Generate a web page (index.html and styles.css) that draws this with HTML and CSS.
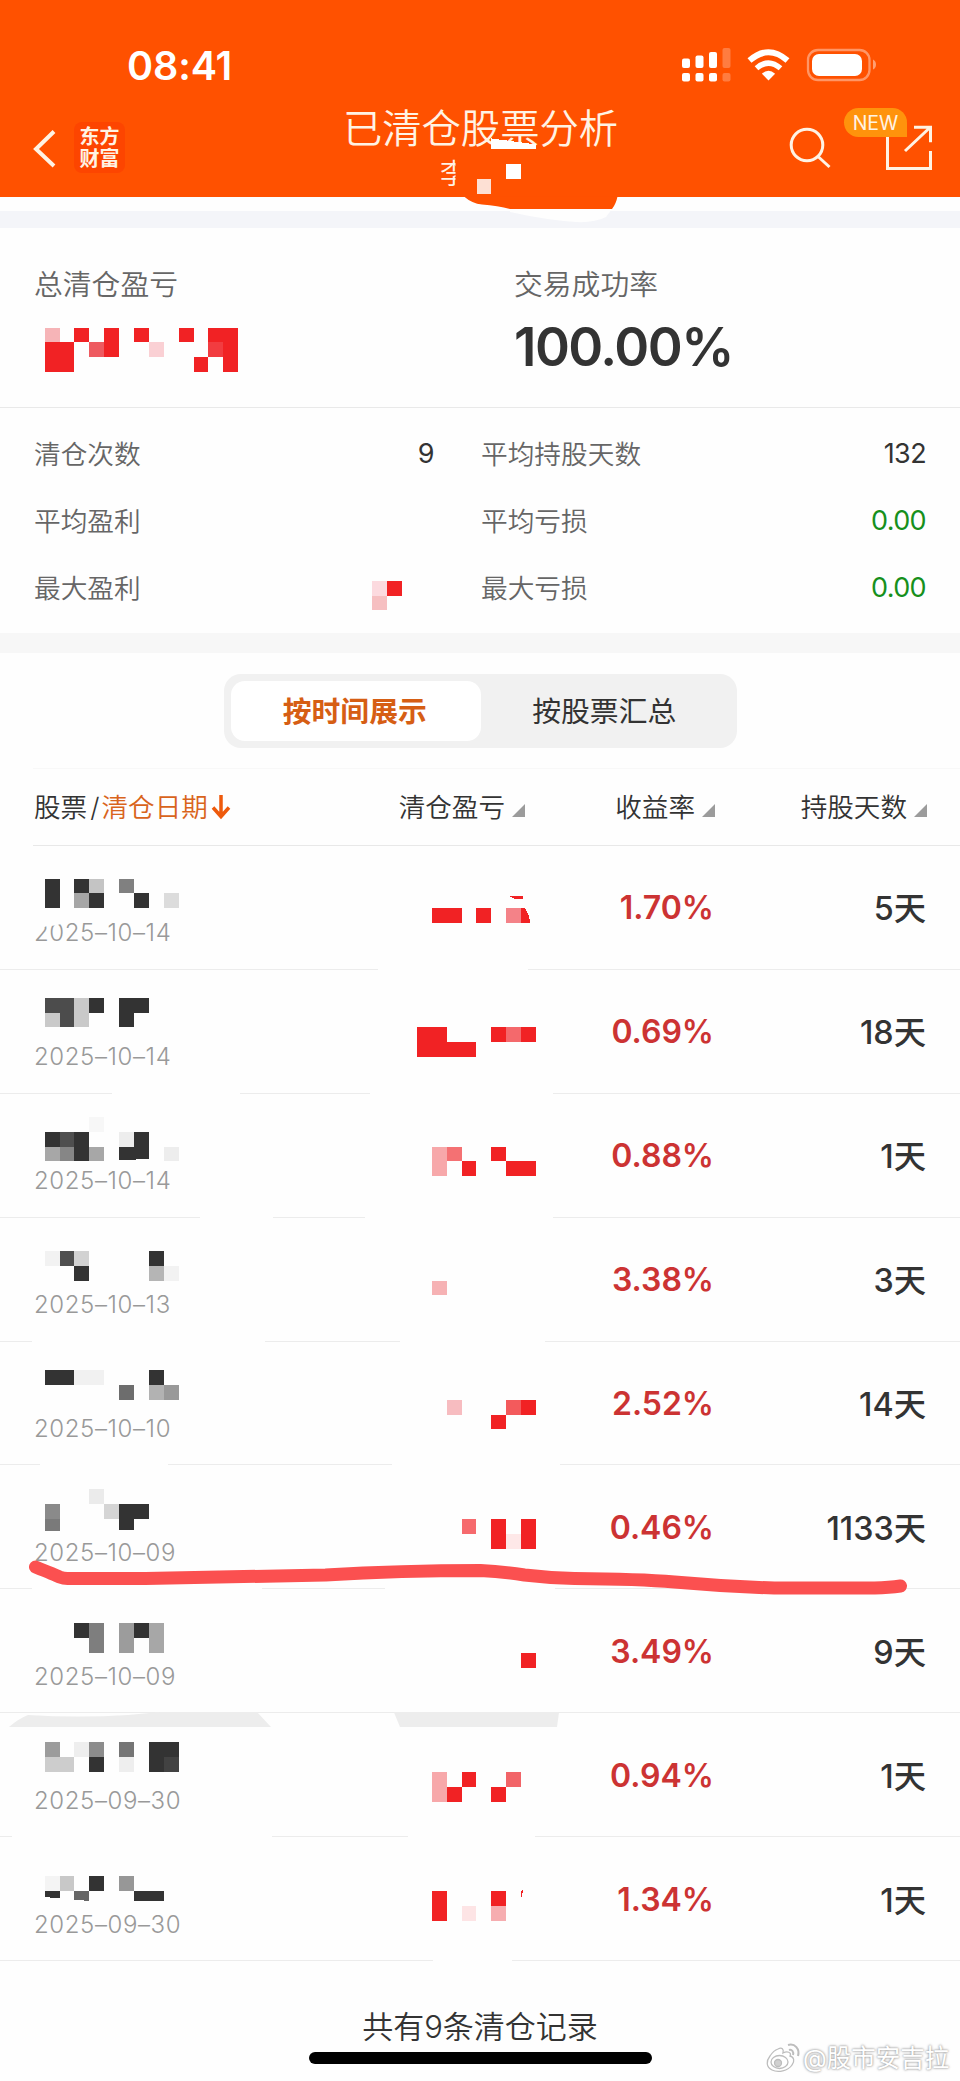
FILE: index.html
```html
<!DOCTYPE html>
<html lang="zh-CN">
<head>
    <meta charset="UTF-8">
    <meta name="viewport" content="width=device-width, initial-scale=1.0">
    <title>已清仓股票分析</title>
    <link rel="stylesheet" href="styles.css">
</head>
<body>
    <div class="page">
        <header class="header">
            <div class="status-bar">
                <span class="time">08:41</span>
                <svg class="status-icons" width="196" height="36" viewBox="680 46 196 36">
                    <g fill="#fff">
                        <rect x="682" y="58.5" width="8" height="9.5" rx="2"/>
                        <rect x="695.5" y="55.5" width="8" height="12.5" rx="2"/>
                        <rect x="709" y="52" width="8" height="16" rx="2"/>
                        <rect x="722.5" y="48" width="8" height="20" rx="2" opacity=".25"/>
                        <rect x="682" y="73" width="8" height="8.5" rx="2"/>
                        <rect x="695.5" y="73" width="8" height="8.5" rx="2"/>
                        <rect x="709" y="73" width="8" height="8.5" rx="2"/>
                        <rect x="722.5" y="73" width="8" height="8.5" rx="2" opacity=".25"/>
                        <path d="M768.5 80.5l-6.6-6.8q6.6-6 13.2 0z"/>
                        <rect x="812" y="54" width="50" height="22" rx="7"/>
                        <path d="M873 59.5q3 1.5 3 5t-3 5z" opacity=".45"/>
                    </g>
                    <g fill="none" stroke="#fff">
                        <path d="M749.5 60.500q19-16.500 38 0" stroke-width="6"/>
                        <path d="M756.500 68.300q12-10.500 24 0" stroke-width="5.500"/>
                        <rect x="808" y="50" width="61.500" height="30" rx="10" stroke-width="2.300" opacity=".4"/>
                    </g>
                </svg>
            </div>
            <div class="nav-bar">
                <div class="nav-left">
                    <svg class="back" width="24" height="40" viewBox="0 0 24 40">
                        <path d="M21 2.500L3 20l18 17" fill="none" stroke="#fff3e4" stroke-width="4"/>
                    </svg>
                    <div class="logo">东方<br>财富</div>
                </div>
                <div class="nav-title">
                    <h1>已清仓股票分析</h1>
                    <div class="account">李</div>
                </div>
                <div class="nav-right">
                    <svg class="search" width="44" height="44" viewBox="0 0 44 44">
                        <g fill="none" stroke="#fff3e4" stroke-width="3">
                            <circle cx="19" cy="19" r="15.800"/>
                            <path d="M30 30.500l11.500 10.500"/>
                        </g>
                    </svg>
                    <div class="share">
                        <svg width="48" height="48" viewBox="884 124 48 48">
                            <path d="M887.500 136v32.500h43V151M914 127.200h16.500v15M905 151l25-23.500" fill="none" stroke="#fff3e4" stroke-width="3"/>
                        </svg>
                        <span class="badge">NEW</span>
                    </div>
                </div>
            </div>
        </header>

        <div class="strip strip-top"></div>

        <section class="overview">
            <div class="overview-item">
                <p class="label">总清仓盈亏</p>
            </div>
            <div class="overview-item">
                <p class="label">交易成功率</p>
                <p class="big">100.00%</p>
            </div>
        </section>

        <section class="stats">
            <div class="stat"><span>清仓次数</span><b>9</b></div>
            <div class="stat"><span>平均持股天数</span><b>132</b></div>
            <div class="stat"><span>平均盈利</span></div>
            <div class="stat"><span>平均亏损</span><b class="green">0.00</b></div>
            <div class="stat"><span>最大盈利</span></div>
            <div class="stat"><span>最大亏损</span><b class="green">0.00</b></div>
        </section>

        <div class="strip strip-mid"></div>

        <div class="tabs">
            <div class="tab active">按时间展示</div>
            <div class="tab">按股票汇总</div>
        </div>

        <div class="list-head">
            <div class="col-name">股票<span class="slash">/</span><em>清仓日期</em>
                <svg width="20" height="26" viewBox="0 0 20 26"><path d="M10 1v21M2 13.500l8 9 8-9" fill="none" stroke="#ee5a0c" stroke-width="3.500"/></svg>
            </div>
            <div>清仓盈亏<i class="sort"></i></div>
            <div>收益率<i class="sort"></i></div>
            <div>持股天数<i class="sort"></i></div>
        </div>

        <div class="list">
            <div class="row"><span class="date">2025–10–14</span><span class="rate">1.70%</span><span class="days">5天</span></div>
            <div class="row"><span class="date">2025–10–14</span><span class="rate">0.69%</span><span class="days">18天</span></div>
            <div class="row"><span class="date">2025–10–14</span><span class="rate">0.88%</span><span class="days">1天</span></div>
            <div class="row"><span class="date">2025–10–13</span><span class="rate">3.38%</span><span class="days">3天</span></div>
            <div class="row"><span class="date">2025–10–10</span><span class="rate">2.52%</span><span class="days">14天</span></div>
            <div class="row"><span class="date">2025–10–09</span><span class="rate">0.46%</span><span class="days">1133天</span></div>
            <div class="row"><span class="date">2025–10–09</span><span class="rate">3.49%</span><span class="days">9天</span></div>
            <div class="row"><span class="date">2025–09–30</span><span class="rate">0.94%</span><span class="days">1天</span></div>
            <div class="row"><span class="date">2025–09–30</span><span class="rate">1.34%</span><span class="days">1天</span></div>
        </div>

        <footer class="footer">
            <p>共有9条清仓记录</p>
            <div class="home-bar"></div>
        </footer>

        <div class="watermark">
            <svg width="36" height="32" viewBox="0 0 36 32">
                <g fill="#fff" stroke="#bdbdbd" stroke-width="1.300">
                    <path d="M13 7c4-2 6 0 5 4 4-2 9-1 7 3 4 1 5 5 2 9-4 6-14 8-20 5-6-3-6-9-2-14 2-3 5-6 8-7z"/>
                    <ellipse cx="14.500" cy="20" rx="8.500" ry="6.500"/>
                    <circle cx="13" cy="21" r="3.500" fill="#d0d0d0"/>
                    <path d="M23 3c7-2 12 4 10 11M24 8c3-1 5 2 4 5" fill="none" stroke-width="2"/>
                </g>
            </svg>
            <span>@股市安吉拉</span>
        </div>

        <!-- privacy mosaic and marker pen, drawn over the whole page -->
        <svg class="marks" width="960" height="2081" viewBox="0 0 960 2081">
            <path d="M455.500 158H476v36h-20.500zM464 196.500q8 7 18 8 16 1 28 4.500h102q4-5 5.500-12.500z" fill="#ff5100"/>
            <path d="M510 209h102l-6 8q-12 6-30 5-30-2-66-10z" fill="#fefefe"/>

            <!-- dividers wiped out by the eraser -->
            <g fill="#fefefe">
                <path d="M378 966h150v7H378z"/>
                <path d="M112 1090h128v7H112zM370 1090h183v7H370z"/>
                <path d="M200 1214h73v7h-73zM365 1214h188v7H365z"/>
                <path d="M32 1338h233v7H32zM400 1338h145v7H400z"/>
                <path d="M40 1461h128v7H40zM392 1461h168v7H392z"/>
                <path d="M32 1585h230v7H32zM385 1585h170v7H385z"/>
                <path d="M12 1833h260v7H12zM408 1833h127v7H408z"/>
                <path d="M433 1957h79v7h-79z"/>
                <path d="M34 918h13v8q-8 4-13 2zM47 918h14v6q-7 3-14 1z"/>
            </g>
            <g fill="#ededed">
                <path d="M9 1727q9-8 19-12 50 3 100 0l32-3h97l14 15z"/>
                <path d="M394 1712.500h165l-2 14.500H400z"/>
            </g>

            <!-- one unit = one mosaic cell -->
            <g class="mosaic" transform="scale(14.890)">
                <path d="M33 9.300l3 .400v.300h-3zM34 11h1v1h-1z" fill="#fff"/>
                <path d="M32.050 12H33v1h-.950z" fill="#fde0d4"/>

                <path class="red" d="M5 22h1v1h-1zM7 22h1v2h-1zM9 22h1v1h-1zM12 22h1v1h-1zM14 22h2v3h-1v-2h-1zM3 23h2v2h-2zM13 24h1v1h-1z"/>
                <path d="M3 22h1v1h-1z" fill="#f6b4b7"/>
                <path d="M6 23h1v1h-1z" fill="#ee5a60"/>
                <path d="M10 23h1v1h-1z" fill="#fad0d4"/>
                <path d="M14 23h1v1h-1z" fill="#f23c40"/>
                <path class="red" d="M26 39h1v1h-1z"/>
                <path d="M25 39h1v1h-1z" fill="#fcdadf"/>
                <path d="M25 40h1v1h-1z" fill="#f6bfc1"/>

                <path class="dark" d="M3 59h1v2h-1zM5 59h1v1h-1zM6 60h1v1h-1zM9 60h1v1h-1z"/>
                <path d="M6 59h1v1h-1z" fill="#c4c4c4"/>
                <path d="M5 60h1v1h-1z" fill="#a6a6a6"/>
                <path d="M8 59h1v1h-1z" fill="#808080"/>
                <path d="M11 60h1v1h-1z" fill="#dcdcdc"/>
                <path class="red" d="M29 61h2v1h-2zM32 61h1v1h-1zM35 61h.250q.300.400.350 1h-.600zM34.250 60.200h.900v.200h-.500z"/>
                <path d="M34 61h1v1h-1z" fill="#f48288"/>

                <path class="dark" d="M6 67h1v1h-1zM8 67h2v1h-1v1h-1z"/>
                <path d="M3 67h2v2h-1v-1h-1z" fill="#4c4c4c"/>
                <path d="M3 68h1v1h-1zM5 67h1v2h-1z" fill="#c9c9c9"/>
                <path class="red" d="M28 69h2v1h2v1h-4zM33 69h1v1h-1zM35 69h1v1h-1z"/>
                <path d="M34 69h1v1h-1z" fill="#f4696c"/>

                <path class="dark" d="M3 76h1v1h-1zM5 76h1v2h-1zM9 76h1v1.850l-2 .050v-.900h1z"/>
                <path d="M4 76h1v1h-1z" fill="#4f4f4f"/>
                <path d="M3 77h1v1h-1zM6 77h1v1h-1z" fill="#a7a7a7"/>
                <path d="M4 77h1v1h-1z" fill="#868686"/>
                <path d="M8 76h1v1h-1zM11 77h1v1h-1z" fill="#ededed"/>
                <path d="M6 75h1v1h-1z" fill="#f7f7f7"/>
                <path class="red" d="M31 78h1v1h-1zM33 77h1v1h-1zM34 78h2v1h-2z"/>
                <path d="M29 77h1v2h-1z" fill="#f7a8aa"/>
                <path d="M30 77h1v1h-1z" fill="#f47173"/>

                <path class="dark" d="M5 85h1v1h-1zM10 84h1v1h-1z"/>
                <path d="M4 84h1v1h-1z" fill="#4f4f4f"/>
                <path d="M5 84h1v1h-1z" fill="#d2d2d2"/>
                <path d="M10 85h1v1h-1z" fill="#b5b5b5"/>
                <path d="M3 84h1v1h-1zM11 85h1v1h-1z" fill="#f2f2f2"/>
                <path d="M29 86h1v1h-1z" fill="#f6b2b4"/>

                <path class="dark" d="M3 92h2v1h-2zM10 92h1v1h-1z"/>
                <path d="M5 92h2v1h-2z" fill="#f1f1f1"/>
                <path d="M8 93h1v1h-1z" fill="#6d6d6d"/>
                <path d="M10 93h1v1h-1z" fill="#b2b2b2"/>
                <path d="M11 93h1v1h-1z" fill="#999"/>
                <path class="red" d="M35 94h1v1h-1zM33 95h1v1h-1z"/>
                <path d="M30 94h1v1h-1z" fill="#f7bcc0"/>
                <path d="M34 94h1v1h-1z" fill="#f35a5c"/>

                <path class="dark" d="M8 101h2v1h-1v.750h-1z"/>
                <path d="M3 101h1v1h-1z" fill="#8a8a8a"/>
                <path d="M3 102h1v.800h-1z" fill="#7a7a7a"/>
                <path d="M6 100h1v1h-1z" fill="#ebebeb"/>
                <path d="M7 101h1v1h-1z" fill="#d5d5d5"/>
                <path class="red" d="M33 102h1v2h-1zM35 102h1v2h-1z"/>
                <path d="M31 102h1v1h-1z" fill="#f66a6d"/>
                <path d="M34 103h1v1h-1z" fill="#fee8e8"/>

                <path class="dark" d="M5 109h1v1h-1zM9 109h1v1h-1z"/>
                <path d="M6 109h1v2h-1z" fill="#7e7e7e"/>
                <path d="M8 109h1v2h-1z" fill="#9c9c9c"/>
                <path d="M10 109h1v2h-1z" fill="#a7a7a7"/>
                <path class="red" d="M35 111h1v1h-1z"/>

                <path class="dark" d="M6 118h1v1h-1zM10 117h2v2h-2z"/>
                <path d="M3 117h1v1h-1z" fill="#9c9c9c"/>
                <path d="M3 118h2v1h-2z" fill="#cdcdcd"/>
                <path d="M5 117h1v1h-1zM8 118h1v1h-1z" fill="#eee"/>
                <path d="M6 117h1v1h-1z" fill="#8c8c8c"/>
                <path d="M8 117h1v1h-1z" fill="#757575"/>
                <path d="M11 118h1v1h-1z" fill="#424242"/>
                <path class="red" d="M30 120h1v1h-1zM31 119h1v1h-1zM33 120h1v1h-1z"/>
                <path d="M29 119h1v2h-1z" fill="#f7a8aa"/>
                <path d="M34 119h1v1h-1z" fill="#f26468"/>

                <path class="dark" d="M6 126h1v1h-1zM3 127h1v.500l-1-.100zM9 127h2v.660h-2z"/>
                <path d="M3 126h1v1h-1z" fill="#f4f4f4"/>
                <path d="M4 126h1v1h-1z" fill="#c8c8c8"/>
                <path d="M8 126h1v1h-1z" fill="#979797"/>
                <path d="M5 127h1v.660l-1-.060z" fill="#666"/>
                <path class="red" d="M29 127h1v2h-1zM33 127h1v1h-1zM35 127l.170-.100-.150.500z"/>
                <path d="M31 128h1v1h-1z" fill="#fde4e5"/>
                <path d="M33 128h1v1h-1z" fill="#f6adb0"/>
            </g>

            <path class="pen" d="M35.500 1567q20 8 24 10 4 1.500 8 1.500h78q90-1.500 180-3.500 75-4.500 155-4.500 22 1 44 4.500 25 3 50 3.500 65 .500 100 3.500 50 4.500 100 6h100q15-.500 26-2"/>
        </svg>
    </div>
</body>
</html>
```
FILE: styles.css
```css
* {
    box-sizing: border-box;
}
body {
    margin: 0;
    background-color: #fefefe;
    color: #333;
    font-family: Inter, "Noto Sans CJK SC", sans-serif;
}
h1, p {
    margin: 0;
    font-weight: 400;
}
.page {
    position: relative;
    width: 960px;
    height: 2081px;
    overflow: hidden;
}

/* header */
.header {
    height: 197px;
    background-color: #ff5100;
    color: #fff3e4;
}
.status-bar {
    display: flex;
    justify-content: space-between;
    height: 100px;
    padding: 46px 84px 0 127px;
}
.time {
    color: #fff;
    font-size: 39.5px;
    line-height: 41px;
    font-weight: 600;
    letter-spacing: -0.1px;
}
.nav-bar {
    display: grid;
    grid-template-columns: 240px 480px 240px;
    height: 97px;
}
.nav-left {
    display: flex;
    align-items: flex-start;
    padding: 22px 0 0 33px;
    gap: 17px;
}
.back {
    margin-top: 7px;
}
.logo {
    width: 51px;
    height: 51px;
    padding-top: 4px;
    border-radius: 8px;
    background-color: #fd4500;
    font-size: 20px;
    line-height: 22px;
    font-weight: 700;
    text-align: center;
}
.nav-title {
    text-align: center;
}
.nav-title h1 {
    height: 58px;
    padding-left: 1px;
    font-size: 39.3px;
    line-height: 58px;
    font-weight: 350;
}
.account {
    margin: 1px 0 0 200px;
    font-size: 28px;
    line-height: 30px;
    font-weight: 350;
    text-align: left;
}
.nav-right {
    display: flex;
    align-items: flex-start;
    padding: 24px 28px 0 68px;
    justify-content: space-between;
}
.search {
    margin-top: 2px;
}
.share {
    position: relative;
}
.badge {
    position: absolute;
    left: -40px;
    top: -16px;
    width: 63px;
    height: 29px;
    border-radius: 15px 15px 0 15px;
    background-color: #ff930c;
    font-size: 19.5px;
    line-height: 30px;
    text-align: center;
}

.strip-top {
    height: 17px;
    margin-top: 14px;
    background-color: #f4f5f9;
}
.strip-mid {
    height: 20px;
    background-color: #f7f7f7;
}

/* totals */
.overview {
    display: grid;
    grid-template-columns: 480px 446px;
    height: 180px;
    padding: 35px 0 0 34px;
    border-bottom: 1px solid #e9e9e9;
}
.label {
    color: #666;
    font-size: 28.8px;
    line-height: 44px;
    font-weight: 350;
}
.big {
    margin-top: 8px;
    font-size: 53px;
    line-height: 64px;
    font-weight: 600;
    letter-spacing: -1.5px;
}
.stats {
    display: grid;
    grid-template-columns: 400px 445px;
    grid-auto-rows: 67px;
    column-gap: 47px;
    height: 225px;
    padding: 12px 0 0 34px;
}
.stat {
    display: flex;
    align-items: center;
    justify-content: space-between;
    color: #666;
    font-size: 26.7px;
    font-weight: 350;
}
.stat span {
    margin-top: -3px;
}
.stat b {
    color: #333;
    font-size: 27px;
    font-weight: 400;
    letter-spacing: -0.6px;
}
.stat .green {
    color: #16901c;
}

/* tabs */
.tabs {
    display: flex;
    width: 513px;
    height: 74px;
    margin: 21px 0 0 224px;
    padding: 7px;
    border-radius: 17px;
    background-color: #f1f1f1;
}
.tab {
    flex: 1;
    padding-right: 2px;
    border-radius: 14px;
    font-size: 28.8px;
    line-height: 61px;
    text-align: center;
}
.tab.active {
    background-color: #fff;
    color: #d65e14;
    font-weight: 600;
}

/* list */
.list-head {
    display: grid;
    grid-template-columns: 200px 291px 190px 212px;
    align-items: center;
    height: 78px;
    margin: 20px 0 0 33px;
    padding: 0 33px 3px 1px;
    border-top: 1px solid #f8f8f8;
    border-bottom: 1px solid #e8e8e8;
    font-size: 26.6px;
    font-weight: 350;
    text-align: right;
    white-space: nowrap;
}
.col-name {
    text-align: left;
}
.slash {
    margin: 0 2px 0 3px;
}
.col-name em {
    color: #d9641c;
    font-style: normal;
}
.col-name svg {
    margin-left: -4px;
    vertical-align: -3px;
}
.sort {
    display: inline-block;
    width: 13px;
    height: 13px;
    margin-left: 7px;
    vertical-align: 0;
    background-color: #9b9b9b;
    clip-path: polygon(100% 0, 100% 100%, 0 100%);
}
.row {
    display: grid;
    grid-template-columns: 400px 280px 213px;
    align-items: center;
    height: 123.9px;
    padding-left: 34px;
    border-bottom: 1px solid #ececec;
    font-size: 32px;
    text-align: right;
}
.date {
    padding-top: 51px;
    color: #999;
    font-size: 24px;
    font-weight: 350;
    letter-spacing: 0.6px;
    text-align: left;
}
.rate {
    padding-top: 1px;
    color: #cc3333;
    font-weight: 600;
}
.days {
    margin-top: -2px;
    padding-right: 1px;
    font-weight: 500;
    font-size: 32.3px;
}

/* footer */
.footer {
    height: 120px;
    padding-top: 44px;
    font-size: 31px;
    line-height: 44px;
    text-align: center;
}
.footer p {
    font-weight: 350;
}
.home-bar {
    width: 343px;
    height: 12px;
    margin: 3px auto 0;
    border-radius: 6px;
    background-color: #000;
}

.watermark {
    position: absolute;
    left: 765px;
    top: 2042px;
    display: flex;
    gap: 2px;
    color: #fff;
    font-size: 24.5px;
    line-height: 33px;
    text-shadow: 0 0 2px #999, 0 0 3px #aaa;
    white-space: nowrap;
}
.marks {
    position: absolute;
    left: 0;
    top: 0;
}
.mosaic {
    shape-rendering: crispEdges;
}
.red {
    fill: #f12224;
}
.dark {
    fill: #333;
}
.pen {
    fill: none;
    stroke: #fb5050;
    stroke-width: 13px;
    stroke-linecap: round;
    stroke-linejoin: round;
}
```
